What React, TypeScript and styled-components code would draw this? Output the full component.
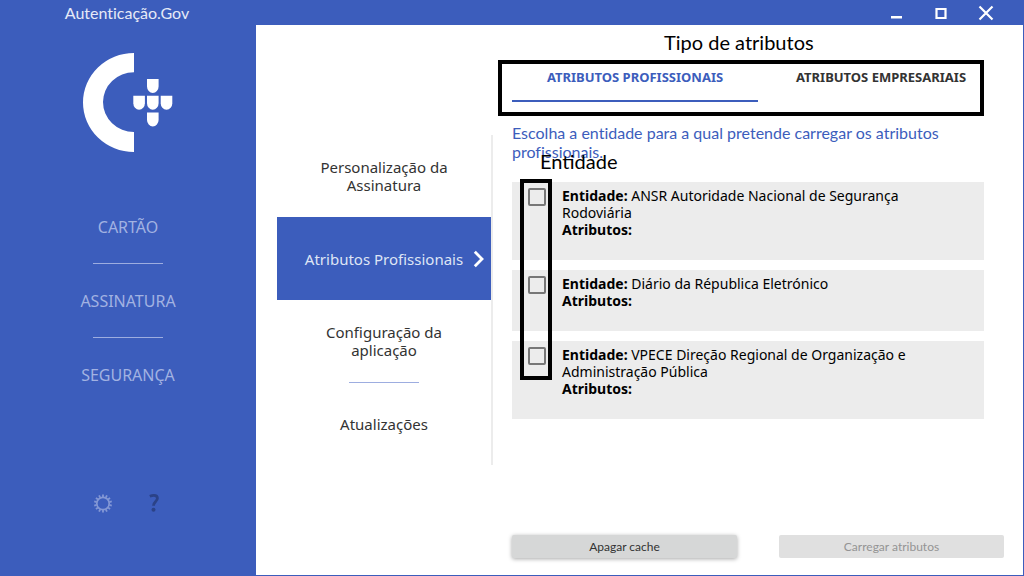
import React from "react";
import styled, { createGlobalStyle } from "styled-components";

const blue = "#3c5dbc";
const humanist = `"Noto Sans", "Open Sans", sans-serif`;
const lato = `Lato, "Liberation Sans", sans-serif`;

const GlobalStyle = createGlobalStyle`
  *, *::before, *::after { box-sizing: border-box; }
  body { margin: 0; background: #fff; color: #333; font-family: ${humanist}; }
  button { font: inherit; color: inherit; background: none; border: 0; padding: 0; margin: 0; cursor: pointer; }
  p, ul { margin: 0; padding: 0; }
  ul { list-style: none; }
`;

const Window = styled.div`
  display: flex;
  flex-direction: column;
  min-height: 100vh;
  border: solid ${blue};
  border-width: 0 1px 1px 0;
`;

const TitleBar = styled.header`
  display: flex;
  align-items: center;
  justify-content: space-between;
  height: 25px;
  padding-right: 29px;
  background: ${blue};
  color: #fff;
`;

const Title = styled.div`
  width: 254px;
  text-align: center;
  font: 16px/20px ${lato};
  font-variant-ligatures: none;
  color: #e6eaf7;
`;

const WindowControls = styled.div`
  display: flex;
  gap: 29px;
`;

const WindowButton = styled.button`
  display: flex;
  width: 16px;
  height: 16px;
`;

const Body = styled.div`
  display: flex;
  flex: 1;
`;

const Sidebar = styled.aside`
  display: flex;
  flex-direction: column;
  align-items: center;
  flex: 0 0 256px;
  padding: 28px 0 62px;
  background: ${blue};
`;

const SideNav = styled.nav`
  display: flex;
  flex-direction: column;
  align-items: center;
  margin-top: 38px;
`;

const SideItem = styled.button`
  height: 73px;
  font-size: 16px;
  color: #a2b2e2;
`;

const Divider = styled.hr`
  width: 70px;
  height: 1px;
  margin: 0 auto;
  border: 0;
  background: #9dade0;
`;

const SideTools = styled.div`
  display: flex;
  gap: 31px;
  margin-top: auto;
`;

const ToolButton = styled.button`
  display: flex;
  justify-content: center;
  width: 20px;
  height: 20px;
`;

const SubMenu = styled.nav`
  flex: 0 0 216px;
  align-self: flex-start;
  margin: 110px 0 0 21px;
  border-right: 2px solid #ececec;
`;

const SubItem = styled.button<{ $active?: boolean }>`
  display: grid;
  grid-template-columns: 24px 1fr 24px;
  align-items: center;
  justify-items: center;
  width: 100%;
  height: ${(p) => (p.$active ? 83 : 82)}px;
  font-size: 15px;
  line-height: 18px;
  background: ${(p) => (p.$active ? blue : "transparent")};
  color: ${(p) => (p.$active ? "#dfe5f5" : "#333")};
`;

const SubLabel = styled.span`
  grid-column: 2;
  max-width: 168px;
  white-space: pre-line;
`;

const Main = styled.main`
  display: flex;
  flex-direction: column;
  flex: 1;
  min-width: 0;
  padding: 29px 19px 17px;
`;

const Tabs = styled.div`
  position: relative;
  display: grid;
  grid-template-columns: 1fr 1fr;
`;

const Tab = styled.button<{ $active?: boolean }>`
  height: 48px;
  border-bottom: 2px solid ${(p) => (p.$active ? blue : "transparent")};
  font-size: 13px;
  font-weight: 700;
  color: ${(p) => (p.$active ? blue : "#333")};
`;

const Hint = styled.p`
  margin: 21px 20px 0 0;
  font: 16px/19px ${lato};
  font-variant-ligatures: none;
  color: ${blue};
`;

const ListArea = styled.section`
  position: relative;
  margin: 21px 20px 20px 0;
`;

const EntityList = styled.ul`
  display: flex;
  flex-direction: column;
  gap: 10px;
`;

const EntityRow = styled.li`
  display: flex;
  gap: 16px;
  padding: 5px 12px 22px 16px;
  background: #ececec;
`;

const Check = styled.input`
  appearance: none;
  flex: none;
  width: 18px;
  height: 18px;
  margin: 1px 0 0;
  border: 2px solid #777;
  border-radius: 2px;
`;

const EntityText = styled.label`
  font-size: 14px;
  line-height: 17px;
  color: #000;
`;

const Line = styled.span`
  display: block;
`;

const Actions = styled.div`
  display: grid;
  grid-template-columns: 1fr 1fr;
  gap: 42px;
  margin-top: auto;
`;

const Action = styled.button`
  height: 23px;
  border-radius: 2px;
  background: #d6d7d7;
  box-shadow: 0 1px 4px rgba(0, 0, 0, 0.35);
  font: 12px/16px ${lato};
  font-variant-ligatures: none;
  color: #333;
  &:disabled {
    background: #e0e0e0;
    box-shadow: none;
    color: #949494;
  }
`;

const Callout = styled.span`
  position: absolute;
  font: 20px/24px ${lato};
  color: #000;
  white-space: nowrap;
`;

const TabsCallout = styled(Callout)`
  top: -24px;
  left: 152px;
`;

const EntityCallout = styled(Callout)`
  top: -33px;
  left: 28px;
`;

const Frame = styled.div`
  position: absolute;
  border: 4px solid #000;
  pointer-events: none;
`;

const TabsFrame = styled(Frame)`
  inset: 6px 20px -14px -14px;
`;

const ChecksFrame = styled(Frame)`
  top: -3px;
  bottom: 39px;
  left: 8px;
  width: 32px;
`;

const shield = "v7.5a5.8 6.5 0 0 0 11.6 0V";

const Logo = () => (
  <svg width="90" height="99" viewBox="0 0 90 99" fill="#fff" role="img" aria-label="Autenticação.Gov">
    <path d="M51 0V19.2A31 29.9 0 0 0 51 79V99A51 49.5 0 0 1 51 0Z" />
    <path d={`M64 26${shield}26Z`} />
    <path d={`M50.3 42.7${shield}42.7Z`} />
    <path d={`M64 42.7${shield}42.7Z`} />
    <path d={`M77.7 42.7${shield}42.7Z`} />
    <path d={`M64 59.5${shield}59.5Z`} />
  </svg>
);

const teeth = Array.from({ length: 14 }, (_, i) => (i * 360) / 14);

const Gear = () => (
  <svg width="20" height="20" viewBox="0 0 20 20" fill="none" stroke="#8397d5">
    <circle cx="10" cy="10.5" r="6.2" strokeWidth="1.7" />
    {teeth.map((a) => (
      <path key={a} d="M10 4V1.500" strokeWidth="1.800" transform={`rotate(${a} 10 10.5)`} />
    ))}
  </svg>
);

const Question = () => (
  <svg width="12" height="20" viewBox="0 0 12 20" fill="none" stroke="#2b4287">
    <path d="M1.800 3.200Q4 2.300 6 2.300C8.500 2.300 9.400 3.700 9.400 5.200C9.400 8.500 5.500 8.500 5.500 12.800" strokeWidth="2.800" />
    <circle cx="5.500" cy="16.800" r="2" fill="#2b4287" stroke="none" />
  </svg>
);

const Chevron = () => (
  <svg width="12" height="18" viewBox="0 0 12 18" fill="none" stroke="#fff" strokeWidth="2.8">
    <path d="M1.800 1.800L9 9L1.800 16.200" />
  </svg>
);

const entities = [
  "ANSR Autoridade Nacional de Segurança Rodoviária",
  "Diário da Républica Eletrónico",
  "VPECE Direção Regional de Organização e Administração Pública",
];

export default function App() {
  return (
    <Window>
      <GlobalStyle />
      <TitleBar>
        <Title>Autenticação.Gov</Title>
        <WindowControls>
          <WindowButton aria-label="Minimizar">
            <svg width="16" height="16" viewBox="0 0 16 16" fill="#fff"><path d="M3 11h11v2.500H3z" /></svg>
          </WindowButton>
          <WindowButton aria-label="Maximizar">
            <svg width="16" height="16" viewBox="0 0 16 16" fill="none" stroke="#fff" strokeWidth="2.200"><path d="M3.500 4h9v9h-9z" /></svg>
          </WindowButton>
          <WindowButton aria-label="Fechar">
            <svg width="16" height="16" viewBox="0 0 16 16" fill="none" stroke="#fff" strokeWidth="2.200"><path d="M1.500 1.500l13 13M14.500 1.500l-13 13" /></svg>
          </WindowButton>
        </WindowControls>
      </TitleBar>
      <Body>
        <Sidebar>
          <Logo />
          <SideNav>
            <SideItem>CARTÃO</SideItem>
            <Divider />
            <SideItem>ASSINATURA</SideItem>
            <Divider />
            <SideItem>SEGURANÇA</SideItem>
          </SideNav>
          <SideTools>
            <ToolButton aria-label="Configurações"><Gear /></ToolButton>
            <ToolButton aria-label="Ajuda"><Question /></ToolButton>
          </SideTools>
        </Sidebar>
        <SubMenu>
          <SubItem><SubLabel>{"Personalização da\nAssinatura"}</SubLabel></SubItem>
          <SubItem $active>
            <SubLabel>Atributos Profissionais</SubLabel>
            <Chevron />
          </SubItem>
          <SubItem><SubLabel>{"Configuração da\naplicação"}</SubLabel></SubItem>
          <Divider />
          <SubItem><SubLabel>Atualizações</SubLabel></SubItem>
        </SubMenu>
        <Main>
          <Tabs>
            <Tab $active>ATRIBUTOS PROFISSIONAIS</Tab>
            <Tab>ATRIBUTOS EMPRESARIAIS</Tab>
            <TabsCallout>Tipo de atributos</TabsCallout>
            <TabsFrame />
          </Tabs>
          <Hint>Escolha a entidade para a qual pretende carregar os atributos profissionais.</Hint>
          <ListArea>
            <EntityList>
              {entities.map((name, i) => (
                <EntityRow key={name}>
                  <Check type="checkbox" id={`entity-${i}`} />
                  <EntityText htmlFor={`entity-${i}`}>
                    <Line><b>Entidade:</b> {name}</Line>
                    <Line><b>Atributos:</b></Line>
                  </EntityText>
                </EntityRow>
              ))}
            </EntityList>
            <EntityCallout>Entidade</EntityCallout>
            <ChecksFrame />
          </ListArea>
          <Actions>
            <Action>Apagar cache</Action>
            <Action disabled>Carregar atributos</Action>
          </Actions>
        </Main>
      </Body>
    </Window>
  );
}
